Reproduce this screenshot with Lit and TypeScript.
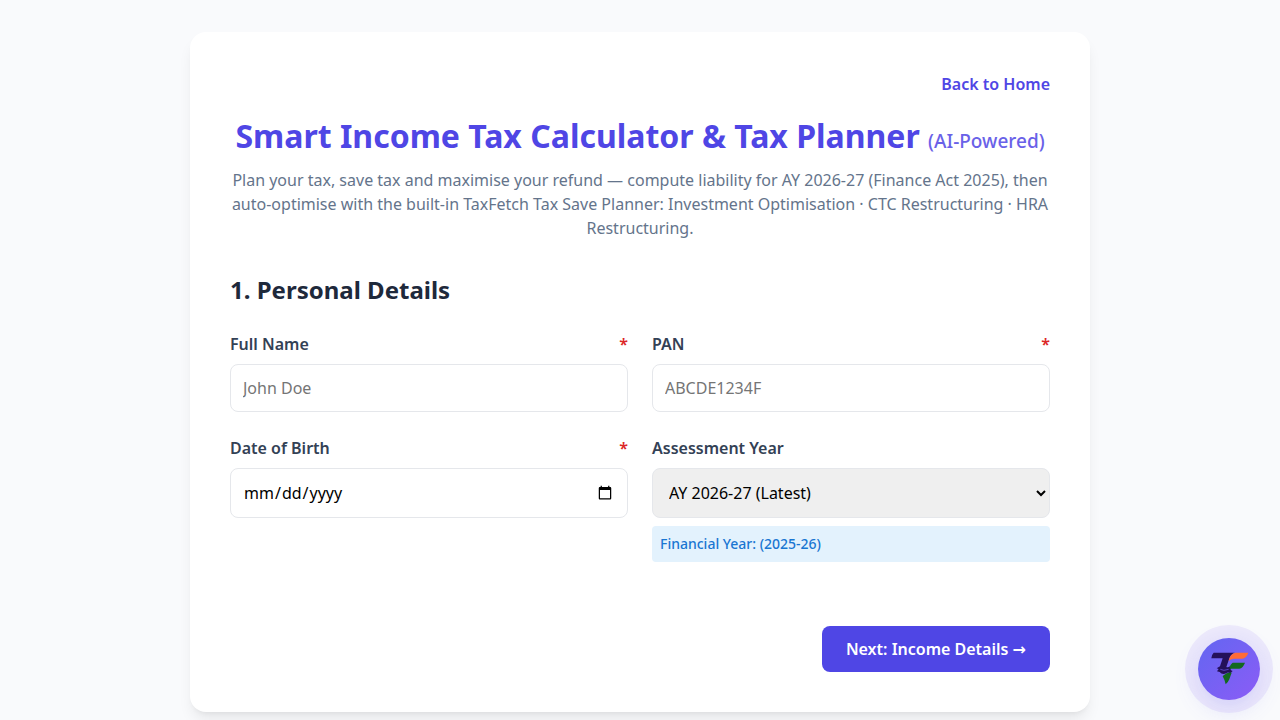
import { LitElement, html, css } from "lit";
import { customElement } from "lit/decorators.js";

@customElement("app-root")
export class AppRoot extends LitElement {
  static styles = css`
    :host { display: block; min-height: 100vh; box-sizing: border-box; padding: 32px 16px; background: #f9fafc; font-family: system-ui, "Noto Sans", "DejaVu Sans", sans-serif; font-size: 16px; line-height: 24px; color: #1e293b; }
    * { box-sizing: border-box; }
    .card { max-width: 900px; margin: 0 auto; padding: 40px; background: #fff; border-radius: 16px; box-shadow: 0 10px 15px -3px rgba(0,0,0,.08), 0 4px 6px -4px rgba(0,0,0,.08); }
    .top { display: flex; justify-content: flex-end; margin-bottom: 16px; }
    .home { color: #4f46e5; font-weight: 600; text-decoration: none; }
    h1 { margin: 0 0 8px; text-align: center; font-size: 32px; line-height: 48px; font-weight: 700; color: #4f46e5; }
    .tag { font-size: 19px; line-height: 20px; font-weight: 500; opacity: .85; }
    .intro { margin: 0 0 32px; text-align: center; color: #64748b; }
    h2 { margin: 0 0 24px; font-size: 24px; line-height: 36px; font-weight: 700; }
    .grid { display: grid; grid-template-columns: 1fr 1fr; gap: 24px; }
    .field { display: flex; flex-direction: column; gap: 8px; }
    label { display: flex; justify-content: space-between; font-weight: 600; color: #334155; }
    .req { color: #dc2626; }
    input, select { width: 100%; height: 48px; padding: 12px; border: 1px solid #e5e7eb; border-radius: 8px; font: inherit; line-height: normal; color: #000; background-color: #fff; }
    .tall { height: 50px; }
    select { background-color: #efefef; }
    .note { padding: 8px; border-radius: 4px; background: #e3f2fd; color: #1976d2; font-size: 14px; line-height: 20px; font-weight: 500; }
    .actions { display: flex; justify-content: flex-end; margin-top: 64px; }
    .next { height: 46px; padding: 0 24px; border: 0; border-radius: 8px; background: #4f46e5; color: #fff; font: inherit; font-weight: 600; }
    .chat { position: fixed; right: 20px; bottom: 20px; width: 62px; height: 62px; padding: 0; border: 0; border-radius: 50%; background: linear-gradient(135deg, #6366f1, #8b5cf6); box-shadow: 0 0 0 13px rgba(124,92,246,.1), 0 8px 24px rgba(99,102,241,.2); }
    .logo { display: block; width: 100%; height: 100%; }
  `;
  render() {
    return html`
      <main class="card">
        <nav class="top"><a class="home" href="#">Back to Home</a></nav>
        <h1>Smart Income Tax Calculator &amp; Tax Planner <span class="tag">(AI-Powered)</span></h1>
        <p class="intro">Plan your tax, save tax and maximise your refund — compute liability for AY 2026-27 (Finance Act 2025), then auto-optimise with the built-in TaxFetch Tax Save Planner: Investment Optimisation · CTC Restructuring · HRA Restructuring.</p>
        <form>
          <h2>1. Personal Details</h2>
          <div class="grid">
            <div class="field"><label for="name">Full Name <span class="req">*</span></label><input id="name" placeholder="John Doe"></div>
            <div class="field"><label for="pan">PAN <span class="req">*</span></label><input id="pan" placeholder="ABCDE1234F"></div>
            <div class="field"><label for="dob">Date of Birth <span class="req">*</span></label><input class="tall" id="dob" type="date"></div>
            <div class="field"><label for="year">Assessment Year</label><select class="tall" id="year"><option>AY 2026-27 (Latest)</option></select>
              <div class="note">Financial Year: (2025-26)</div></div>
          </div>
          <div class="actions"><button class="next" type="button">Next: Income Details →</button></div>
        </form>
      </main>
      <button class="chat" aria-label="Open assistant">
        <svg class="logo" viewBox="54 54 186 186" aria-hidden="true">
          <path fill="#24105a" d="M101 98H164Q152 103 148 115L139 141Q144 143 150 139L153 145Q149 150 158 153L151 160Q143 155 139 160Q126 165 119 156L111 154L116 147L110 145L120 139L128 115H94Q94 105 101 98Z"/>
          <path fill="none" stroke="#6f5cf3" stroke-width="2" d="M121 148Q130 154 146 148"/>
          <path fill="#ff6b35" d="M166 98H205Q200 113 188 116H161Q151 117 146 124Q149 102 166 98Z"/>
          <path fill="#13691f" d="M158 128H195Q189 144 178 146H149Q149 134 158 128ZM131 166Q141 156 155 158L148 178Q144 188 137 193Q134 179 128 169Z"/>
        </svg>
      </button>
    `;
  }
}
